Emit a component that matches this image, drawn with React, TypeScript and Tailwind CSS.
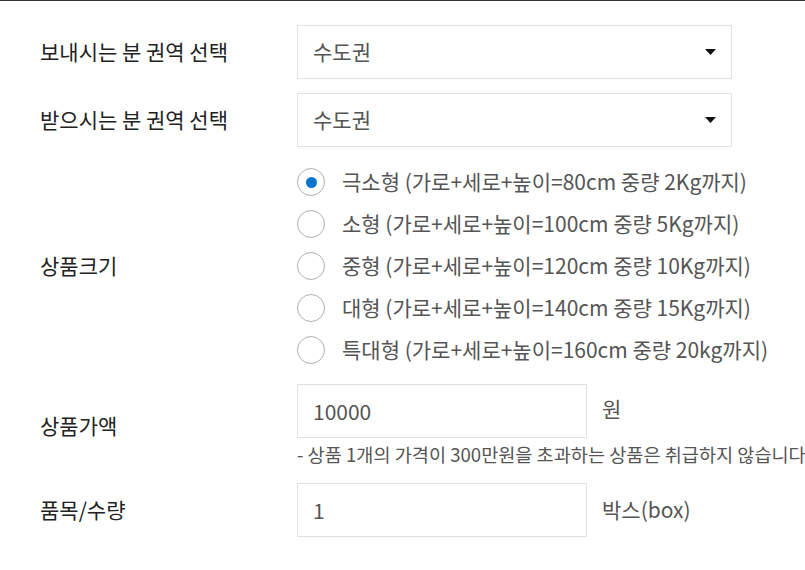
import React, { useState } from 'react';

const font = { fontFamily: '"Noto Sans CJK KR", "Noto Sans", sans-serif' };

const sizes = [
  '극소형 (가로+세로+높이=80cm 중량 2Kg까지)',
  '소형 (가로+세로+높이=100cm 중량 5Kg까지)',
  '중형 (가로+세로+높이=120cm 중량 10Kg까지)',
  '대형 (가로+세로+높이=140cm 중량 15Kg까지)',
  '특대형 (가로+세로+높이=160cm 중량 20kg까지)',
];

const SelectBox: React.FC<{ value: string }> = ({ value }) => (
  <div className="w-[435px] h-[54px] border border-[#e1e1e1] flex items-center justify-between pl-[15px] pr-[15px]">
    <span className="text-[21px] text-[#555]">{value}</span>
    <svg width="11" height="6" viewBox="0 0 11 6">
      <path d="M0 0 L11 0 L5.5 6 Z" fill="#111" />
    </svg>
  </div>
);

const Row: React.FC<{ label: string; children: React.ReactNode }> = ({ label, children }) => (
  <div className="flex items-center">
    <div className="w-[257px] shrink-0 text-[21px] text-[#222]">{label}</div>
    <div className="flex-1 min-w-0">{children}</div>
  </div>
);

export default function App() {
  const [size, setSize] = useState(0);
  const [price, setPrice] = useState('10000');
  const [qty, setQty] = useState('1');

  return (
    <div className="w-[805px] h-[570px] bg-white border-t border-[#333] overflow-hidden" style={font}>
      <div className="pl-[40px] pt-[24px] flex flex-col">
        <Row label="보내시는 분 권역 선택">
          <SelectBox value="수도권" />
        </Row>
        <div className="h-[14px]" />
        <Row label="받으시는 분 권역 선택">
          <SelectBox value="수도권" />
        </Row>
        <div className="h-[14px]" />
        <Row label="상품크기">
          <div className="flex flex-col">
            {sizes.map((s, i) => (
              <button
                key={s}
                onClick={() => setSize(i)}
                className="h-[42px] flex items-center gap-[17px] text-left whitespace-nowrap"
              >
                <span className="w-[28px] h-[28px] rounded-full border-[1.5px] border-[#b0b0b0] bg-white flex items-center justify-center shrink-0">
                  {size === i && <span className="w-[11px] h-[11px] rounded-full bg-[#0a74cf]" />}
                </span>
                <span className="text-[21px] text-[#555]">{s}</span>
              </button>
            ))}
          </div>
        </Row>
        <div className="h-[13px]" />
        <Row label="상품가액">
          <div className="flex flex-col">
            <div className="flex items-center gap-[15px]">
              <input
                value={price}
                onChange={(e) => setPrice(e.target.value)}
                className="w-[290px] h-[54px] border border-[#e1e1e1] px-[15px] text-[21px] text-[#555] outline-none"
              />
              <span className="text-[21px] text-[#555] -mt-[4px]">원</span>
            </div>
            <p className="mt-[3px] text-[18.6px] leading-[26px] text-[#555] whitespace-nowrap">
              - 상품 1개의 가격이 300만원을 초과하는 상품은 취급하지 않습니다.
            </p>
          </div>
        </Row>
        <div className="h-[16px]" />
        <Row label="품목/수량">
          <div className="flex items-center gap-[15px]">
            <input
              value={qty}
              onChange={(e) => setQty(e.target.value)}
              className="w-[290px] h-[54px] border border-[#e1e1e1] px-[15px] text-[21px] text-[#555] outline-none"
            />
            <span className="text-[21px] text-[#555]">박스(box)</span>
          </div>
        </Row>
      </div>
    </div>
  );
}
